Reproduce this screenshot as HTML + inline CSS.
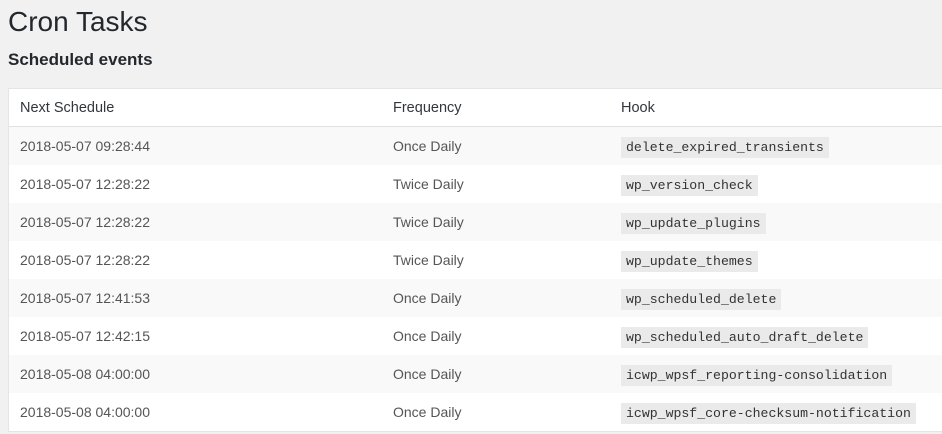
<!DOCTYPE html>
<html><head><meta charset="utf-8"><style>
*{margin:0;padding:0;box-sizing:border-box}
body{width:942px;height:434px;overflow:hidden;background:#f1f1f1;font-family:"Liberation Sans",sans-serif;color:#23282d}
h1{position:absolute;left:8px;top:2px;font-size:28px;font-weight:400;line-height:40px}
h2{position:absolute;left:8px;top:49px;font-size:17px;font-weight:600;line-height:22px}
.tbl{position:absolute;left:8px;top:88px;width:940px;border:1px solid #e5e5e5;background:#fff}
.row{height:38px;position:relative;font-size:14px;color:#555}
.row span{position:absolute;top:0;line-height:38px}
.c1{left:11px}.c2{left:384px}.c3{left:612px}
.hd{height:38px;border-bottom:1px solid #e1e1e1;font-size:14.5px;color:#32373c}
.odd{background:#f9f9f9}
code{font-family:"Liberation Mono",monospace;font-size:13.2px;background:#eaeaea;padding:3px 5px;color:#333}
</style></head><body>
<h1>Cron Tasks</h1>
<h2>Scheduled events</h2>
<div class="tbl">
<div class="row hd"><span class="c1">Next Schedule</span><span class="c2">Frequency</span><span class="c3">Hook</span></div>
<div class="row odd"><span class="c1">2018-05-07 09:28:44</span><span class="c2">Once Daily</span><span class="c3"><code>delete_expired_transients</code></span></div>
<div class="row"><span class="c1">2018-05-07 12:28:22</span><span class="c2">Twice Daily</span><span class="c3"><code>wp_version_check</code></span></div>
<div class="row odd"><span class="c1">2018-05-07 12:28:22</span><span class="c2">Twice Daily</span><span class="c3"><code>wp_update_plugins</code></span></div>
<div class="row"><span class="c1">2018-05-07 12:28:22</span><span class="c2">Twice Daily</span><span class="c3"><code>wp_update_themes</code></span></div>
<div class="row odd"><span class="c1">2018-05-07 12:41:53</span><span class="c2">Once Daily</span><span class="c3"><code>wp_scheduled_delete</code></span></div>
<div class="row"><span class="c1">2018-05-07 12:42:15</span><span class="c2">Once Daily</span><span class="c3"><code>wp_scheduled_auto_draft_delete</code></span></div>
<div class="row odd"><span class="c1">2018-05-08 04:00:00</span><span class="c2">Once Daily</span><span class="c3"><code>icwp_wpsf_reporting-consolidation</code></span></div>
<div class="row"><span class="c1">2018-05-08 04:00:00</span><span class="c2">Once Daily</span><span class="c3"><code>icwp_wpsf_core-checksum-notification</code></span></div>
</div>
</body></html>
